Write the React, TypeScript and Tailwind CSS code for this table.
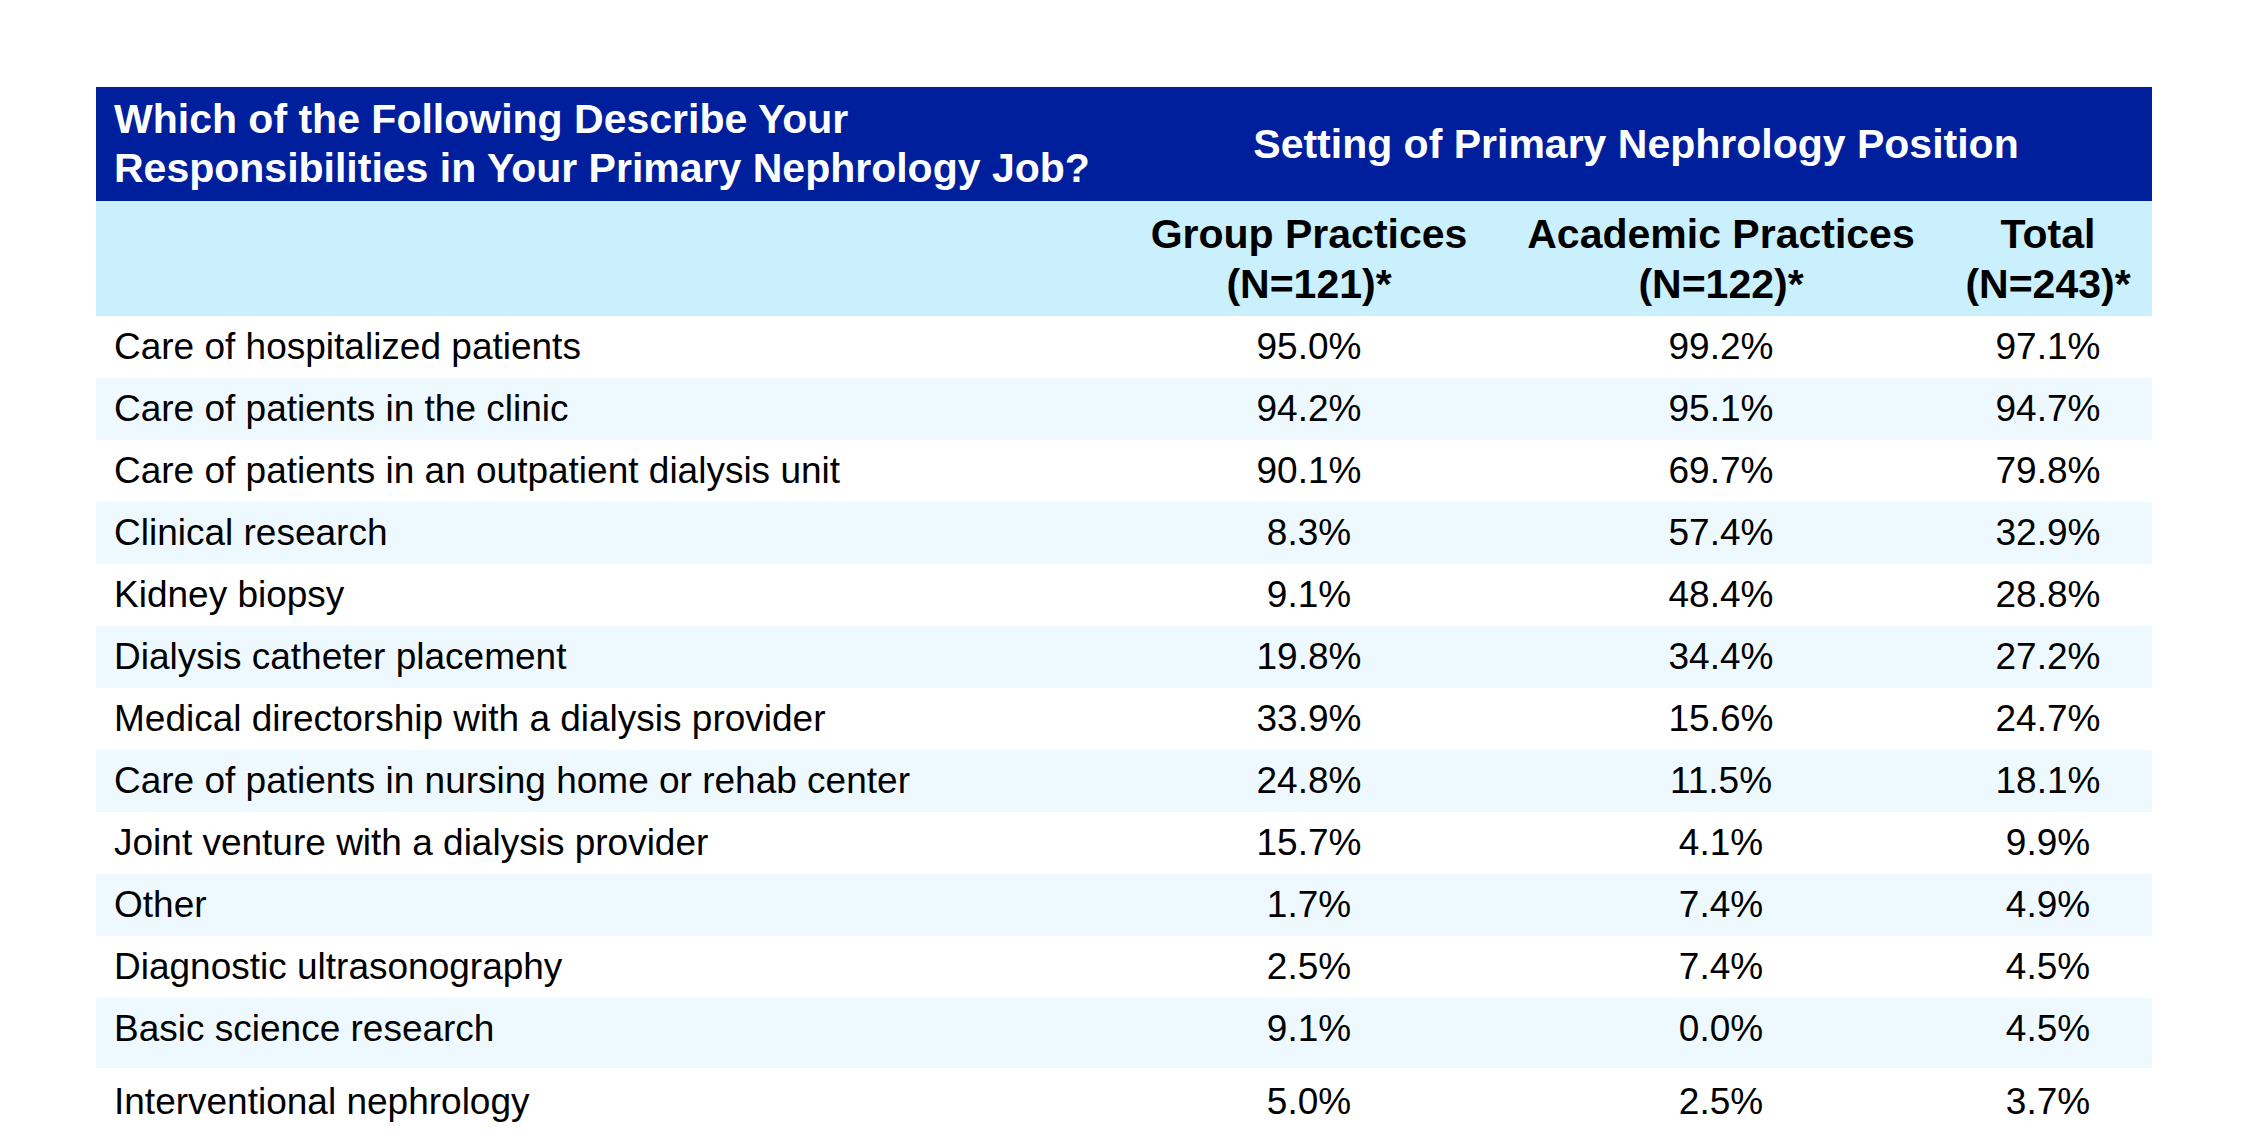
import React from 'react';

type Row = { label: string; group: string; academic: string; total: string };

const rows: Row[] = [
  { label: 'Care of hospitalized patients', group: '95.0%', academic: '99.2%', total: '97.1%' },
  { label: 'Care of patients in the clinic', group: '94.2%', academic: '95.1%', total: '94.7%' },
  { label: 'Care of patients in an outpatient dialysis unit', group: '90.1%', academic: '69.7%', total: '79.8%' },
  { label: 'Clinical research', group: '8.3%', academic: '57.4%', total: '32.9%' },
  { label: 'Kidney biopsy', group: '9.1%', academic: '48.4%', total: '28.8%' },
  { label: 'Dialysis catheter placement', group: '19.8%', academic: '34.4%', total: '27.2%' },
  { label: 'Medical directorship with a dialysis provider', group: '33.9%', academic: '15.6%', total: '24.7%' },
  { label: 'Care of patients in nursing home or rehab center', group: '24.8%', academic: '11.5%', total: '18.1%' },
  { label: 'Joint venture with a dialysis provider', group: '15.7%', academic: '4.1%', total: '9.9%' },
  { label: 'Other', group: '1.7%', academic: '7.4%', total: '4.9%' },
  { label: 'Diagnostic ultrasonography', group: '2.5%', academic: '7.4%', total: '4.5%' },
  { label: 'Basic science research', group: '9.1%', academic: '0.0%', total: '4.5%' },
  { label: 'Interventional nephrology', group: '5.0%', academic: '2.5%', total: '3.7%' },
];

const cols = 'grid grid-cols-[1024px_378px_446px_208px]';

function rowClass(i: number) {
  const stripe = i % 2 === 1 ? 'bg-[#edf9fe]' : 'bg-white';
  if (i === 11) return `${stripe} h-[70px] pb-[8px]`;
  if (i === 12) return `${stripe} h-[65px] pt-[3px]`;
  return `${stripe} h-[62px]`;
}

export default function App() {
  return (
    <div
      className="w-full h-[1148px] bg-white pt-[87px] pl-[96px] overflow-hidden"
      style={{ fontFamily: '"Liberation Sans", Arial, Helvetica, sans-serif' }}
    >
      <div className="w-[2056px]">
        {/* title band */}
        <div className={`${cols} h-[114px] bg-[#001f9d] text-white font-bold text-[41px] leading-[49px]`}>
          <div className="flex items-center pl-[18px]">
            <span>
              Which of the Following Describe Your
              <br />
              Responsibilities in Your Primary Nephrology Job?
            </span>
          </div>
          <div className="col-span-3 flex items-center justify-center">
            Setting of Primary Nephrology Position
          </div>
        </div>

        {/* column headings */}
        <div className={`${cols} h-[115px] bg-[#c9f0fc] text-black font-bold text-[41px] leading-[50px]`}>
          <div />
          <div className="flex flex-col items-center justify-center text-center">
            <span>Group Practices</span>
            <span>(N=121)*</span>
          </div>
          <div className="flex flex-col items-center justify-center text-center">
            <span>Academic Practices</span>
            <span>(N=122)*</span>
          </div>
          <div className="flex flex-col items-center justify-center text-center">
            <span>Total</span>
            <span>(N=243)*</span>
          </div>
        </div>

        {/* data */}
        {rows.map((r, i) => (
          <div key={r.label} className={`${cols} ${rowClass(i)} text-[37px] text-black`}>
            <div className="flex items-center pl-[18px]">{r.label}</div>
            <div className="flex items-center justify-center">{r.group}</div>
            <div className="flex items-center justify-center">{r.academic}</div>
            <div className="flex items-center justify-center">{r.total}</div>
          </div>
        ))}
      </div>
    </div>
  );
}
